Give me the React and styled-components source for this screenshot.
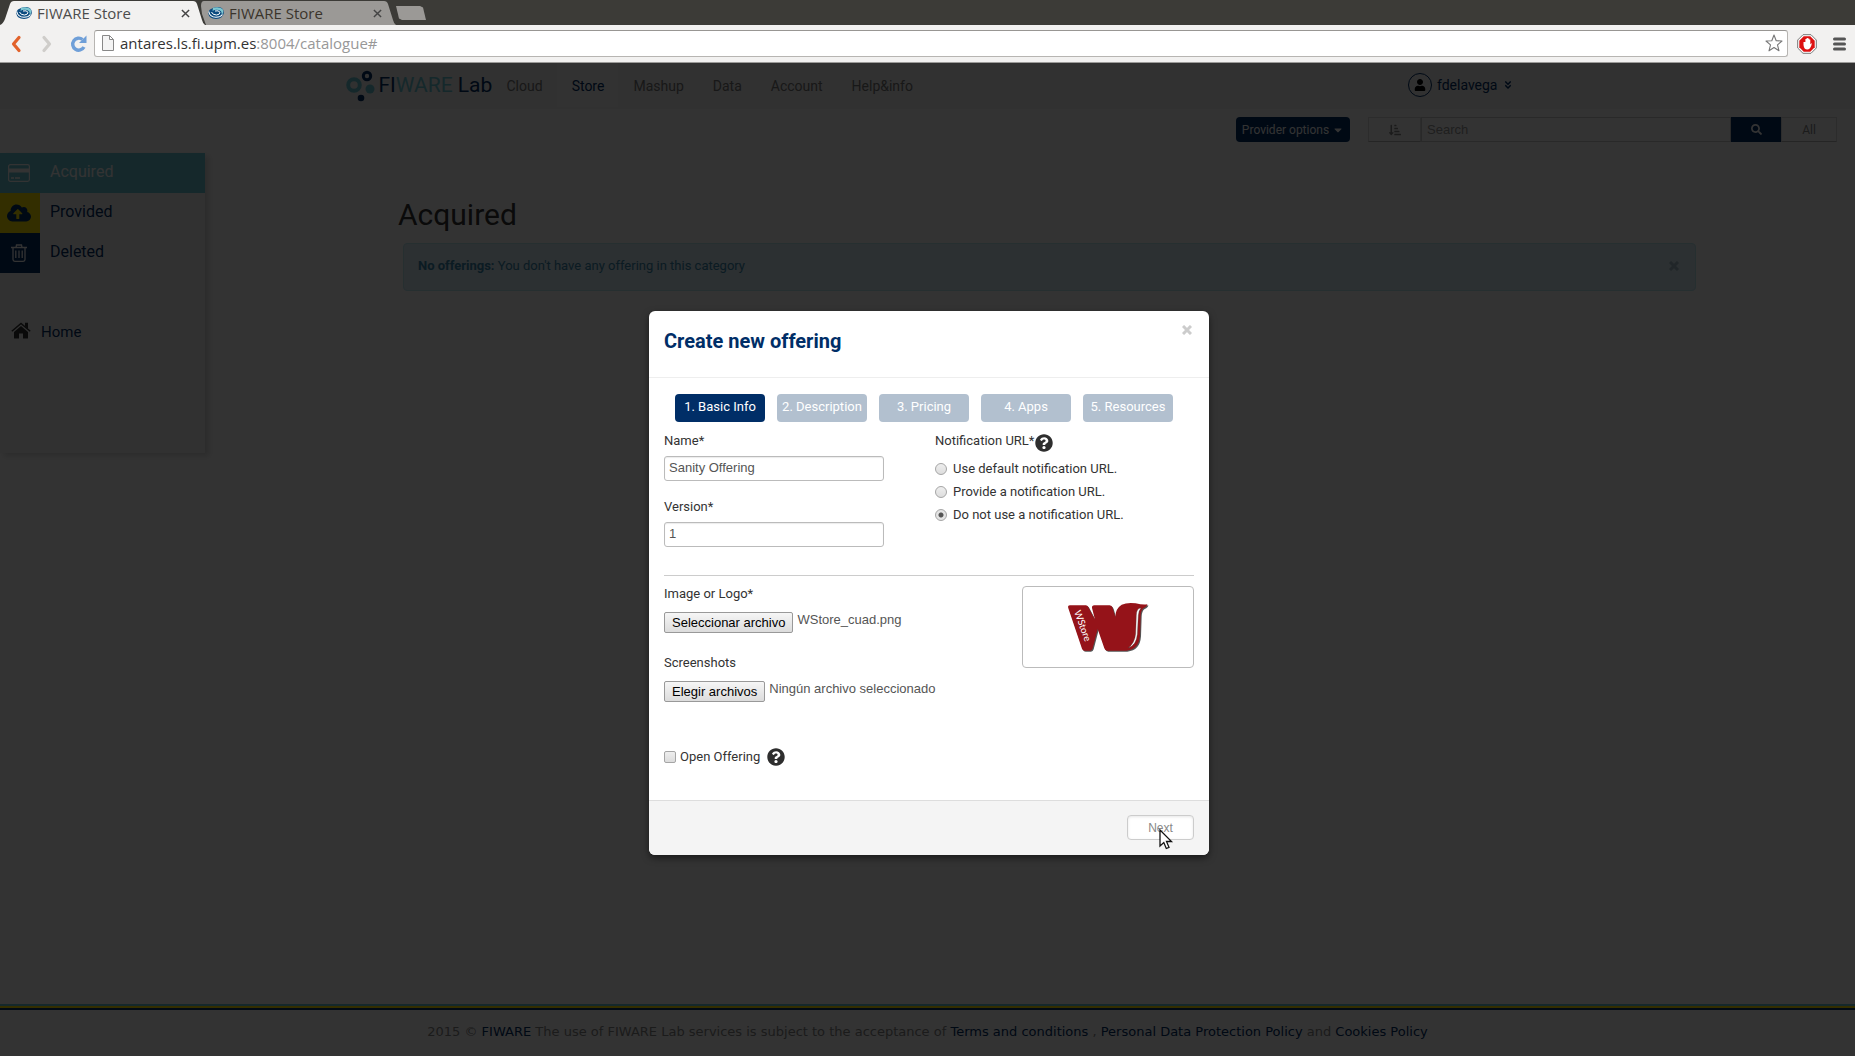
import React from "react";
import styled, { createGlobalStyle, css } from "styled-components";
import { FaCloudUploadAlt, FaSearch, FaSortAmountDownAlt, FaHome, FaUser, FaCaretDown, FaAngleDoubleDown, FaQuestionCircle } from "react-icons/fa";

const navy = "#002e67";
const teal = "#69c8d7";
const yellow = "#ffe600";
const ui = `Roboto, "Liberation Sans", sans-serif`;
const arial = `"Liberation Sans", Arial, sans-serif`;
const chrome = `"Open Sans", "Noto Sans", sans-serif`;

const Global = createGlobalStyle`
  * { box-sizing: border-box; }
  body { margin: 0; background: #fff; color: #333; font: 14px/20px ${ui}; }
  button, input { font-family: inherit; margin: 0; }
  a { color: inherit; text-decoration: none; }
  h1, h2, p { margin: 0; padding: 0; }
  svg { display: block; flex: none; }
`;

const Window = styled.div`
  min-height: 100vh;
  display: flex;
  flex-direction: column;
`;

/* Browser frame */
const TabStrip = styled.div`
  display: flex;
  height: 25px;
  padding-top: 1px;
  background: #3c3b37;
`;
const Tab = styled.div`
  display: flex;
  align-items: center;
  width: ${(p) => (p.$active ? 205 : 195)}px;
  margin-left: ${(p) => (p.$active ? 0 : -4)}px;
  padding: 0 ${(p) => (p.$active ? 15 : 14)}px 0 ${(p) => (p.$active ? 16 : 7)}px;
  gap: 5px;
  background: ${(p) => (p.$active ? "#f2f1f0" : "#9b9996")};
  clip-path: ${(p) =>
    p.$active
      ? `path("M0 24 Q3 23 5 18 L10 3 Q11 0 14 0 L193 0 Q196 0 197 3 L202 19 Q203 23 205 24 Z")`
      : `path("M5 24 L1 13 L0 5 Q0 0 3 0 L183 0 Q186 0 187 3 L192 19 Q193 23 195 24 Z")`};
  font: 15px/20px ${chrome};
  color: ${(p) => (p.$active ? "#4c4c4c" : "#3a342b")};
`;
const TabTitle = styled.span`
  flex: 1;
`;
const TabClose = styled.button`
  border: 0;
  padding: 0;
  background: none;
  color: #444;
  display: flex;
`;
const NewTab = styled.button`
  align-self: center;
  width: 30px;
  height: 14px;
  margin: 0;
  border: 0;
  padding: 0;
  background: #9b9996;
  clip-path: polygon(0 0, 80% 0, 90% 10%, 100% 100%, 20% 100%, 10% 90%);
`;
const BrowserBar = styled.div`
  display: flex;
  align-items: center;
  height: 38px;
  padding: 0 1px 0 9px;
  background: #f2f1f0;
  border-bottom: 1px solid #9c9b99;
`;
const BarButton = styled.button`
  display: flex;
  justify-content: center;
  width: ${(p) => p.$w}px;
  border: 0;
  padding: 0;
  background: none;
`;
const Address = styled.div`
  flex: 1;
  display: flex;
  align-items: center;
  height: 27px;
  margin-left: 8px;
  padding: 0 4px 1px 7px;
  gap: 6px;
  background: #fff;
  border: 1px solid #b7b5b2;
  border-top-color: #989693;
  border-radius: 3px;
`;
const Url = styled.div`
  flex: 1;
  outline: 0;
  font: 15px/20px ${chrome};
  color: #989898;
  b { font-weight: 400; color: #333; }
`;

/* Page */
const Viewport = styled.div`
  flex: 1;
  position: relative;
  display: flex;
  flex-direction: column;
`;
const NavBar = styled.header`
  background: #f4f4f4;
`;
const Container = styled.div`
  display: flex;
  max-width: 1170px;
  height: 46px;
  margin: 0 auto;
`;
const Brand = styled.a`
  display: flex;
  align-items: center;
  gap: 4px;
  padding: 0 0 3px 2px;
  width: 149px;
  font: 21px/24px ${ui};
  color: ${navy};
  white-space: nowrap;
  i { font-style: normal; color: ${teal}; }
`;
const Nav = styled.nav`
  display: flex;
  flex: 1;
`;
const NavLink = styled.a`
  display: flex;
  align-items: center;
  height: 44px;
  padding: 2px 14px 0 15px;
  color: ${(p) => (p.$active ? navy : "#777")};
  background: ${(p) => (p.$active ? "#fafafa" : "none")};
  font-size: 14px;
`;
const UserMenu = styled.button`
  display: flex;
  align-items: center;
  gap: 5px;
  height: 44px;
  border: 0;
  padding: 0;
  background: none;
  color: ${navy};
  font-size: 14px;
`;
const Avatar = styled.span`
  display: flex;
  align-items: center;
  justify-content: center;
  width: 24px;
  height: 24px;
  border: 1px solid ${navy};
  border-radius: 50%;
  color: #000;
`;
const Toolbar = styled.div`
  display: flex;
  justify-content: flex-end;
  height: 44px;
  padding: 8px 18px 0;
`;
const ProviderButton = styled.button`
  display: flex;
  align-items: center;
  justify-content: center;
  gap: 3px;
  width: 114px;
  height: 25px;
  margin-right: 18px;
  padding: 0;
  border: 0;
  border-radius: 4px;
  background: ${navy};
  color: #fff;
  font-size: 12px;
`;
const SearchGroup = styled.form`
  display: flex;
  height: 25px;
`;
const GroupButton = styled.button`
  display: flex;
  align-items: center;
  justify-content: center;
  width: ${(p) => p.$w}px;
  padding: 0;
  border: 1px solid ${(p) => (p.$primary ? navy : "#ddd")};
  background: ${(p) => (p.$primary ? navy : "#fff")};
  color: ${(p) => (p.$primary ? "#fff" : "#888")};
  font-size: 12px;
  border-bottom-color: ${(p) => (p.$primary ? navy : "#bbb")};
`;
const SearchInput = styled.input`
  width: 310px;
  border: 1px solid #ccc;
  padding: 0 5px;
  background: #fff;
  font: 13px/20px ${arial};
  &::placeholder { color: #999; opacity: 1; }
`;
const Body = styled.div`
  flex: 1;
  display: flex;
  align-items: flex-start;
`;
const Sidebar = styled.aside`
  flex: none;
  width: 205px;
  height: 300px;
  background: #f6f6f6;
  box-shadow: 4px 3px 6px #d8d8d8;
`;
const SideItem = styled.a`
  display: flex;
  height: 40px;
  color: ${(p) => (p.$active ? "#fff" : navy)};
  background: ${(p) => (p.$active ? teal : "none")};
  font-size: 16px;
  line-height: 37px;
  gap: 10px;
`;
const SideIcon = styled.span`
  display: flex;
  align-items: center;
  justify-content: center;
  width: 40px;
  height: 40px;
  padding-right: 2px;
  background: ${(p) => p.$bg};
`;
const HomeLink = styled.a`
  display: flex;
  align-items: center;
  gap: 10px;
  margin-top: 44px;
  padding-left: 11px;
  color: ${navy};
  font-size: 15px;
  line-height: 24px;
  span { padding-top: 3px; }
  svg { color: #333; }
`;
const Main = styled.main`
  flex: 1;
  padding: 42px 159px 0 193px;
`;
const Heading = styled.h1`
  font: 400 30px/40px ${ui};
  color: #333;
`;
const Alert = styled.div`
  display: flex;
  justify-content: space-between;
  height: 48px;
  margin: 8px 0 0 5px;
  padding: 12px 11px 0 14px;
  border: 1px solid #bce8f1;
  border-radius: 4px;
  background: #d9edf7;
  color: #3a87ad;
  font-size: 13px;
`;
const CloseButton = styled.button`
  display: flex;
  border: 0;
  padding: 5px;
  background: none;
  color: ${(p) => p.$color};
`;
const PageFooter = styled.footer`
  border-top: 2px solid ${teal};
  &::before {
    content: "";
    display: block;
    height: 4px;
    background: linear-gradient(${yellow} 50%, ${navy} 50%);
  }
`;
const Legal = styled.p`
  height: 46px;
  padding-top: 12px;
  text-align: center;
  font: 13px/20px "DejaVu Sans", Verdana, sans-serif;
  color: #888;
  a { color: ${navy}; }
`;

/* Modal */
const Backdrop = styled.div`
  position: absolute;
  inset: 0;
  display: flex;
  justify-content: center;
  align-items: flex-start;
  padding: 248px 0 0 3px;
  background: rgba(0, 0, 0, 0.8);
`;
const Dialog = styled.section`
  width: 560px;
  border-radius: 6px;
  background: #fff;
  box-shadow: 0 3px 7px rgba(0, 0, 0, 0.5);
`;
const DialogHeader = styled.div`
  display: flex;
  justify-content: space-between;
  align-items: flex-start;
  height: 67px;
  padding: 9px 12px 0 15px;
  border-bottom: 1px solid #eee;
`;
const Title = styled.h2`
  padding-top: 6px;
  font: 700 20px/30px ${ui};
  color: ${navy};
`;
const DialogBody = styled.div`
  padding: 16px 15px 0;
`;
const Steps = styled.div`
  display: flex;
  gap: 12px;
  padding-left: 11px;
`;
const Step = styled.button`
  width: 90px;
  height: 28px;
  border: 0;
  border-radius: 4px;
  padding: 0 0 3px;
  background: ${(p) => (p.$active ? navy : "#b2c0cf")};
  color: #fff;
  font-size: 13px;
`;
const Columns = styled.div`
  display: grid;
  grid-template-columns: 271px 1fr;
  height: 154px;
  padding-top: 9px;
  border-bottom: 1px solid #ccc;
`;
const Label = styled.label`
  display: block;
  font-size: 13px;
  line-height: 20px;
  color: #333;
`;
const Legend = styled.div`
  display: flex;
  gap: 1px;
  font-size: 13px;
  line-height: 20px;
  margin-bottom: 5px;
  svg { margin-top: 3px; }
`;
const TextInput = styled.input`
  display: block;
  width: 220px;
  height: 25px;
  margin: 5px 0 16px;
  padding: 0 4px 2px;
  border: 1px solid #bbb;
  border-radius: 3px;
  box-shadow: inset 0 1px 1px rgba(0, 0, 0, 0.08);
  color: #555;
  font: 13px/20px ${arial};
`;
const Choice = styled.label`
  display: flex;
  align-items: center;
  gap: ${(p) => p.$gap}px;
  height: 23px;
  font-size: 13px;
  line-height: 20px;
  color: #333;
`;
const tick = css`
  appearance: none;
  flex: none;
  width: 12px;
  height: 12px;
  border: 1px solid #a5a5a5;
`;
const Radio = styled.input`
  ${tick}
  border-radius: 50%;
  background: linear-gradient(#eee, #ddd);
  &:checked { background: radial-gradient(circle, #555 0 2px, #e4e4e4 3px); }
`;
const Check = styled.input`
  ${tick}
  border-radius: 2px;
  background: linear-gradient(#eee, #dcdcdc);
  &:checked { background: #666; }
`;
const Uploads = styled.div`
  display: flex;
  justify-content: space-between;
  align-items: flex-start;
  padding-top: 8px;
`;
const FileField = styled.div`
  margin-bottom: 20px;
`;
const FileRow = styled.div`
  display: flex;
  gap: 4px;
  margin-top: 8px;
`;
const HiddenFile = styled.input`
  position: absolute;
  width: 1px;
  height: 1px;
  opacity: 0;
`;
const FileButton = styled.label`
  height: 21px;
  padding: 0 7px;
  border: 1px solid #999;
  border-radius: 2px;
  background: linear-gradient(#f6f6f6, #dcdcdc);
  color: #000;
  font: 13px/20px ${arial};
`;
const FileName = styled.span`
  color: #555;
  font: 13px/16px ${arial};
`;
const Preview = styled.div`
  display: flex;
  justify-content: center;
  width: 172px;
  height: 82px;
  margin-top: 2px;
  padding-top: 15px;
  border: 1px solid #bbb;
  border-radius: 4px;
`;
const OpenRow = styled.div`
  display: flex;
  align-items: center;
  gap: 7px;
  padding: 23px 0 32px;
`;
const DialogFooter = styled.div`
  display: flex;
  justify-content: flex-end;
  padding: 14px 15px 15px;
  border-top: 1px solid #ddd;
  border-radius: 0 0 6px 6px;
  background: #f4f4f4;
`;
const NextButton = styled.button`
  width: 67px;
  height: 25px;
  border: 1px solid #ccc;
  border-radius: 4px;
  background: #fff;
  box-shadow: inset 0 1px 3px rgba(0, 0, 0, 0.1);
  color: #888;
  font: 12px/18px ${arial};
`;
const Pointer = styled.svg`
  position: absolute;
  left: calc(50% + 230px);
  top: 766px;
`;

const Cross = ({ size, width }) => (
  <svg width={size} height={size} viewBox="0 0 10 10" stroke="currentColor" strokeWidth={width}>
    <path d="M1 1 L9 9 M9 1 L1 9" />
  </svg>
);

const Swirl = () => (
  <svg width="16" height="14" viewBox="0 0 16 14" fill="none">
    <path d="M2 3.500 Q6 .5 11 1 Q16 2 15.800 7 Q15 12.500 8 13 Q1 12.500 .3 7.500 Q.3 5 2 3.500 Z" fill="#0c4b80" />
    <path d="M5 1.800 Q11 0 14.500 3 Q16.500 6.500 13.500 9 Q14.500 5 11 4 Q7 3 4.500 5 Z" fill="#7cc7d2" />
    <path d="M.8 5.500 Q1.500 11 8 11.300 Q12.500 11.200 14.500 8.500" stroke="#fff" strokeWidth="1.100" />
    <path d="M3.500 6 Q4.500 9 8.500 9 Q12 8.700 12 6.300 Q10.500 4 7 5" stroke="#fff" strokeWidth="1" />
  </svg>
);

const BrandMark = () => (
  <svg width="30" height="34" viewBox="0 0 30 34" fill="none">
    <circle cx="9" cy="17" r="5.800" stroke={teal} strokeWidth="4" />
    <circle cx="22" cy="8" r="3.700" stroke={navy} strokeWidth="3" />
    <circle cx="25" cy="21" r="4.500" fill={teal} />
    <circle cx="16" cy="30" r="3.300" fill={navy} />
  </svg>
);

const Star = () => (
  <svg width="18" height="18" viewBox="0 0 18 18" fill="#fff" stroke="#777" strokeWidth="1.100" strokeLinejoin="round">
    <path d="M9 1 L11.200 6.700 L17 7 L12.500 10.800 L14 16.800 L9 13.500 L4 16.800 L5.500 10.800 L1 7 L6.800 6.700 Z" />
  </svg>
);

const Blocker = () => (
  <svg width="20" height="20" viewBox="0 0 20 20">
    <path d="M6 .7 H14 L19.300 6 V14 L14 19.300 H6 L.7 14 V6 Z" fill="#fff" stroke="#777" />
    <path d="M6.700 2.300 H13.300 L17.700 6.700 V13.300 L13.300 17.700 H6.700 L2.300 13.300 V6.700 Z" fill="#dd1111" />
    <path d="M6.500 8 V11 Q7 15.500 10.300 15.500 Q13 15.500 14.500 11 L14.800 9 L13.300 10.300 V5.500 H12.200 V4.500 H10.900 V4 H9.600 V5 H8.400 V8 Z" fill="#fff" />
  </svg>
);

const Card = () => (
  <svg width="22" height="18" viewBox="0 0 22 18" fill="none" stroke="currentColor">
    <rect x=".6" y=".6" width="20.800" height="16.800" rx="1.800" strokeWidth="1.200" />
    <path d="M1 6.500 H21" strokeWidth="4" />
    <path d="M3 14 H6 M7 14 H12" strokeWidth="1.400" />
  </svg>
);

const Bin = () => (
  <svg width="16" height="18" viewBox="0 0 16 18" fill="none" stroke="#fff" strokeWidth="1.300">
    <path d="M0 3.500 H16 M5 3.500 L5.500 1 H10.500 L11 3.500 M2 3.500 V15.500 Q2 17.300 3.800 17.300 H12.200 Q14 17.300 14 15.500 V3.500" />
    <path d="M4.800 6.500 V14 M8 6.500 V14 M11.200 6.500 V14" />
  </svg>
);

const House = () => (
  <svg width="20" height="17" viewBox="0 0 20 17" fill="currentColor">
    <path d="M10 4 L17 10 V16 Q17 16.500 16.500 16.500 H12 V11.500 H8 V16.500 H3.500 Q3 16.500 3 16 V10 Z" />
    <path d="M.8 9.300 L10 1.500 L19.200 9.300" fill="none" stroke="currentColor" strokeWidth="1.500" />
    <path d="M14 .8 H17 V7 L14 4.500 Z" />
  </svg>
);

const StoreLogo = () => (
  <svg width="82" height="50" viewBox="142 65 246 150">
    <path
      transform="translate(3 3)"
      fill="#555"
      d="M151 75 H199 Q205 76 207 82 L226 118 L217 83 Q216 75 224 75 H270 Q277 76 279 83 L287 110 Q287 85 306 73 Q322 66 348 69 Q368 74 383 72 Q383 79 372 83 Q364 88 363 105 L361 165 Q358 208 320 211 H263 Q256 211 254 204 L234 146 L219 204 Q217 211 211 211 H195 Q189 211 187 205 L146 84 Q143 75 151 75 Z"
    />
    <path
      fill="#951319"
      d="M151 75 H199 Q205 76 207 82 L226 118 L217 83 Q216 75 224 75 H270 Q277 76 279 83 L287 110 Q287 85 306 73 Q322 66 348 69 Q368 74 383 72 Q383 79 372 83 Q364 88 363 105 L361 165 Q358 208 320 211 H263 Q256 211 254 204 L234 146 L219 204 Q217 211 211 211 H195 Q189 211 187 205 L146 84 Q143 75 151 75 Z"
    />
    <path fill="#fff" stroke="#444" strokeWidth="1" d="M364 83 Q350 84 350 105 L348 160 Q345 190 325 203 Q350 196 353 162 L356 105 Q357 90 364 83 Z" />
    <text transform="translate(163 94) rotate(70)" fill="#fff" fontFamily="Lato, sans-serif" fontSize="29">WStore</text>
  </svg>
);

const Help = () => <FaQuestionCircle size={18} color="#2e2e2e" aria-label="Help" />;

const nav = ["Cloud", "Store", "Mashup", "Data", "Account", "Help&info"];
const steps = ["1. Basic Info", "2. Description", "3. Pricing", "4. Apps", "5. Resources"];
const urlModes = ["Use default notification URL.", "Provide a notification URL.", "Do not use a notification URL."];

function Upload({ id, label, button, file }) {
  return (
    <FileField>
      <Label htmlFor={id}>{label}</Label>
      <FileRow>
        <HiddenFile type="file" id={id} />
        <FileButton htmlFor={id}>{button}</FileButton>
        <FileName>{file}</FileName>
      </FileRow>
    </FileField>
  );
}

function BrowserFrame() {
  return (
    <>
      <TabStrip>
        {[true, false].map((active) => (
          <Tab key={String(active)} $active={active}>
            <Swirl />
            <TabTitle>FIWARE Store</TabTitle>
            <TabClose aria-label="Close tab"><Cross size={9} width={1.6} /></TabClose>
          </Tab>
        ))}
        <NewTab aria-label="New tab" />
      </TabStrip>
      <BrowserBar>
        <BarButton $w={14} aria-label="Back">
          <svg width="12" height="18" viewBox="0 0 12 18" fill="none" stroke="#e2622b" strokeWidth="3.200" strokeLinecap="round" strokeLinejoin="round"><path d="M9 2.500 L3.500 9 L9 15.500" /></svg>
        </BarButton>
        <BarButton $w={48} aria-label="Forward">
          <svg width="12" height="18" viewBox="0 0 12 18" fill="none" stroke="#cfcdca" strokeWidth="3.200" strokeLinecap="round" strokeLinejoin="round"><path d="M3 2.500 L8.500 9 L3 15.500" /></svg>
        </BarButton>
        <BarButton $w={15} aria-label="Reload">
          <svg width="17" height="18" viewBox="0 0 17 18" fill="none"><path d="M14 12 A6 6 0 1 1 12.500 4.500" stroke="#6f9fd8" strokeWidth="3.400" /><path d="M16.500 .5 V8 H9 Z" fill="#6f9fd8" /></svg>
        </BarButton>
        <Address>
          <svg width="12" height="16" viewBox="0 0 12 16" fill="#f4f4f4" stroke="#888"><path d="M.5 .5 H7.500 L11.500 4.500 V15.500 H.5 Z M7.500 .5 V4.500 H11.500" /></svg>
          <Url role="textbox" aria-label="Address"><b>antares.ls.fi.upm.es</b>:8004/catalogue#</Url>
          <Star />
        </Address>
        <BarButton $w={37} aria-label="Ad blocker"><Blocker /></BarButton>
        <BarButton $w={29} aria-label="Menu">
          <svg width="13" height="14" viewBox="0 0 13 14" stroke="#555" strokeWidth="3" strokeLinecap="round"><path d="M1.500 2 H11.500 M1.500 7 H11.500 M1.500 12 H11.500" /></svg>
        </BarButton>
      </BrowserBar>
    </>
  );
}

function OfferingDialog() {
  return (
    <Dialog role="dialog" aria-label="Create new offering">
      <DialogHeader>
        <Title>Create new offering</Title>
        <CloseButton $color="#ccc" aria-label="Close"><Cross size={10} width={3} /></CloseButton>
      </DialogHeader>
      <DialogBody>
        <Steps>
          {steps.map((s, i) => <Step key={s} $active={i === 0}>{s}</Step>)}
        </Steps>
        <Columns>
          <div>
            <Label htmlFor="name">Name*</Label>
            <TextInput id="name" type="text" defaultValue="Sanity Offering" />
            <Label htmlFor="version">Version*</Label>
            <TextInput id="version" type="text" defaultValue="1" />
          </div>
          <div role="radiogroup" aria-labelledby="url-label">
            <Legend><span id="url-label">Notification URL*</span><Help /></Legend>
            {urlModes.map((m, i) => (
              <Choice key={m} $gap={6}><Radio type="radio" name="url" defaultChecked={i === 2} />{m}</Choice>
            ))}
          </div>
        </Columns>
        <Uploads>
          <div>
            <Upload id="logo" label="Image or Logo*" button="Seleccionar archivo" file="WStore_cuad.png" />
            <Upload id="shots" label="Screenshots" button="Elegir archivos" file="Ningún archivo seleccionado" />
          </div>
          <Preview><StoreLogo /></Preview>
        </Uploads>
        <OpenRow>
          <Choice $gap={4}><Check type="checkbox" />Open Offering</Choice>
          <Help />
        </OpenRow>
      </DialogBody>
      <DialogFooter><NextButton>Next</NextButton></DialogFooter>
    </Dialog>
  );
}

export default function App() {
  return (
    <Window>
      <Global />
      <BrowserFrame />
      <Viewport>
        <NavBar>
          <Container>
            <Brand href="#"><BrandMark /><span>FI<i>WARE</i> Lab</span></Brand>
            <Nav>{nav.map((n) => <NavLink key={n} href="#" $active={n === "Store"}>{n}</NavLink>)}</Nav>
            <UserMenu><Avatar><FaUser size={12} /></Avatar>fdelavega<FaAngleDoubleDown size={10} /></UserMenu>
          </Container>
        </NavBar>
        <Toolbar>
          <ProviderButton>Provider options<FaCaretDown size={12} /></ProviderButton>
          <SearchGroup>
            <GroupButton type="button" $w={53} aria-label="Sort"><FaSortAmountDownAlt size={12} /></GroupButton>
            <SearchInput type="text" placeholder="Search" aria-label="Search" />
            <GroupButton type="button" $w={50} $primary aria-label="Run search"><FaSearch size={11} /></GroupButton>
            <GroupButton type="button" $w={56}>All</GroupButton>
          </SearchGroup>
        </Toolbar>
        <Body>
          <Sidebar>
            <SideItem href="#" $active><SideIcon $bg="none"><Card /></SideIcon>Acquired</SideItem>
            <SideItem href="#"><SideIcon $bg={yellow}><FaCloudUploadAlt size={24} /></SideIcon>Provided</SideItem>
            <SideItem href="#"><SideIcon $bg={navy}><Bin /></SideIcon>Deleted</SideItem>
            <HomeLink href="#"><House /><span>Home</span></HomeLink>
          </Sidebar>
          <Main>
            <Heading>Acquired</Heading>
            <Alert>
              <span><strong>No offerings:</strong> You don't have any offering in this category</span>
              <CloseButton $color="#a5bfca" aria-label="Dismiss"><Cross size={10} width={3} /></CloseButton>
            </Alert>
          </Main>
        </Body>
        <PageFooter>
          <Legal>
            2015 © <a href="#">FIWARE</a> The use of FIWARE Lab services is subject to the acceptance of{" "}
            <a href="#">Terms and conditions</a> , <a href="#">Personal Data Protection Policy</a> and <a href="#">Cookies Policy</a>
          </Legal>
        </PageFooter>
        <Backdrop><OfferingDialog /></Backdrop>
        <Pointer width="16" height="22" viewBox="0 0 16 22" fill="#fff" stroke="#111" strokeWidth="1.300">
          <path d="M2 1 V17 L5.800 13.500 L8.300 19.500 L11 18.300 L8.500 12.500 H13.500 Z" />
        </Pointer>
      </Viewport>
    </Window>
  );
}
